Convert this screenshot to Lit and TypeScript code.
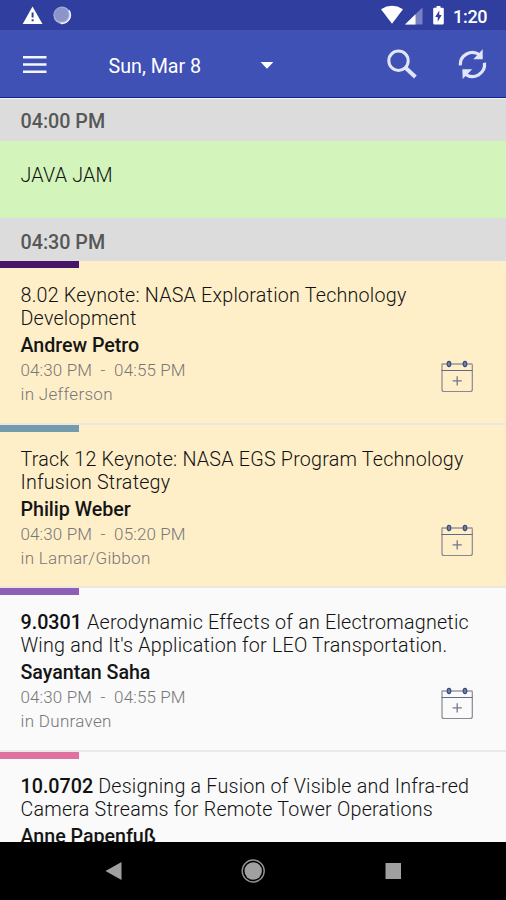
import { LitElement, html, css, svg, nothing } from "lit";
import { customElement, property } from "lit/decorators.js";

interface Session {
  code?: string;
  lines: string[];
  speaker: string;
  time: string;
  room?: string;
  track: string;
  keynote: boolean;
}

const sessions: Session[] = [
  { lines: ["8.02 Keynote: NASA Exploration Technology", "Development"], speaker: "Andrew Petro", time: "04:30 PM  -  04:55 PM", room: "in Jefferson", track: "#481667", keynote: true },
  { lines: ["Track 12 Keynote: NASA EGS Program Technology", "Infusion Strategy"], speaker: "Philip Weber", time: "04:30 PM  -  05:20 PM", room: "in Lamar/Gibbon", track: "#739bae", keynote: true },
  { code: "9.0301", lines: ["Aerodynamic Effects of an Electromagnetic", "Wing and It's Application for LEO Transportation."], speaker: "Sayantan Saha", time: "04:30 PM  -  04:55 PM", room: "in Dunraven", track: "#8f5fb7", keynote: false },
  { code: "10.0702", lines: ["Designing a Fusion of Visible and Infra-red", "Camera Streams for Remote Tower Operations"], speaker: "Anne Papenfuß", time: "", track: "#df729f", keynote: false },
];

@customElement("status-bar")
export class StatusBar extends LitElement {
  static styles = css`
    :host { display: flex; align-items: center; height: 30px; flex: none; background: #303f9f; color: #fff; }
    svg { display: block; flex: none; }
    .left { margin-left: 22px; }
    .right { margin-left: auto; }
    .clock { width: 53px; box-sizing: border-box; padding-top: 2px; font: 500 18px/27px Roboto, sans-serif; letter-spacing: -0.3px; }
  `;
  render() {
    return html`
      <svg class="left" width="50" height="30" viewBox="22 0 50 30">
        <path d="M32.5 6.5 42.5 24H22.7z" fill="#fff" />
        <path d="M31.6 12.6h2v5h-2zM31.6 19.2h2v2h-2z" fill="#303f9f" />
        <circle cx="62" cy="15.2" r="8.6" fill="#abb2dc" />
        <circle cx="61.5" cy="14.6" r="7.2" fill="#8c95ca" />
        <path d="M69 10.5A8.4 8.4 0 0 1 60.5 23.2" fill="none" stroke="#eef0fb" stroke-width="1.6" />
      </svg>
      <svg class="right" width="73" height="30" viewBox="380 0 73 30">
        <path d="M381 9.2Q392 2.3 403 9.2L392 23.8z" fill="#fff" />
        <path d="M422.5 7.5V24.5H405z" fill="#7782c2" />
        <path d="M415.5 14.3V24.5H405z" fill="#fff" />
        <path d="M434.5 7.7h2V6h4v1.700h2q1.300 0 1.300 1.300v14.300q0 1.300-1.300 1.300h-8q-1.300 0-1.300-1.300V9q0-1.300 1.300-1.300z" fill="#fff" />
        <path d="M439.300 10.500 435.200 16.900h2.500v4.800l4-6.800h-2.400z" fill="#303f9f" />
      </svg>
      <div class="clock">1:20</div>
    `;
  }
}

@customElement("app-bar")
export class AppBar extends LitElement {
  static styles = css`
    :host { display: flex; align-items: center; height: 67px; flex: none; background: #3f51b5; color: #fff; border-bottom: 1px solid #0d239c; }
    svg { display: block; flex: none; }
    .menu { margin-left: 22px; }
    .date { margin-left: 60.500px; width: 151.500px; padding-top: 6px; font: 400 19.700px/24px Roboto, sans-serif; white-space: nowrap; }
    .search { margin-left: auto; margin-right: 38px; }
    .sync { margin-right: 14px; }
  `;
  render() {
    return html`
      <svg class="menu" width="26" height="67" viewBox="22 30 26 67">
        <path d="M23 57.200h23.500M23 64.500h23.500M23 71.800h23.500" stroke="#f5f6fd" stroke-width="2.600" />
      </svg>
      <div class="date">Sun, Mar 8</div>
      <svg width="14" height="67" viewBox="260 30 14 67"><path d="M260.600 62h12.800l-6.400 6.700z" fill="#fff" /></svg>
      <svg class="search" width="34" height="67" viewBox="384 30 34 67">
        <circle cx="398.500" cy="60.700" r="9.700" fill="none" stroke="#e1e5f8" stroke-width="3" />
        <path d="M405 67.200 415.400 77" stroke="#e1e5f8" stroke-width="4" />
      </svg>
      <svg class="sync" width="36" height="67" viewBox="456 30 36 67">
        <g fill="none" stroke="#e1e5f8" stroke-width="3.200">
          <path d="M460.300 65.300A12.200 12.200 0 0 1 479.500 54.700" />
          <path d="M484.500 62.800A12.200 12.200 0 0 1 465.300 74.200" />
        </g>
        <path d="M482.700 49.300V59.200H473.300zM462.300 69.200H472.200L462.700 79z" fill="#e1e5f8" />
      </svg>
    `;
  }
}

@customElement("session-card")
export class SessionCard extends LitElement {
  @property({ attribute: false }) session!: Session;
  static styles = css`
    :host { display: block; height: 163.700px; flex: none; font-family: Roboto, sans-serif; }
    .card { height: 100%; box-sizing: border-box; background: #fafafa; border-bottom: 2px solid #e9e9e9; display: flex; flex-direction: column; }
    .keynote { background: #ffefc9; border-bottom-color: #eee7dc; }
    .track { width: 79px; height: 7px; flex: none; }
    .body { display: flex; justify-content: space-between; padding: 16px 32px 0 20.500px; }
    .text > div { white-space: pre; }
    .line { font-weight: 300; font-size: 19.700px; line-height: 23px; color: #111; letter-spacing: 0.220px; }
    .line b { font-weight: 500; letter-spacing: 0; }
    .speaker { font-weight: 500; font-size: 19.700px; line-height: 24px; margin-top: 4px; color: #151515; letter-spacing: -0.050px; }
    .meta { font-weight: 300; font-size: 17px; line-height: 24px; color: #777; letter-spacing: 0.320px; }
    .meta.time { letter-spacing: 0.120px; }
    .add { margin-top: 76px; flex: none; display: block; width: 34px; margin-left: -40px; }
  `;
  render() {
    const s = this.session;
    return html`
      <div class="card ${s.keynote ? "keynote" : ""}">
        <div class="track" style="background:${s.track}"></div>
        <div class="body">
          <div class="text">
            <div class="line">${s.code ? html`<b>${s.code}</b> ` : nothing}${s.lines[0]}</div>
            <div class="line">${s.lines[1]}</div>
            <div class="speaker">${s.speaker}</div>
            ${s.room
              ? html`<div class="meta time">${s.time}</div><div class="meta">${s.room}</div>`
              : nothing}
          </div>
          <svg class="add" width="34" height="34" viewBox="0 0 34 34" fill="none">
            <path d="M2 4.500V29.500Q2 31.500 4 31.500H30.300Q32.300 31.500 32.300 29.500V4.500" stroke="#8b8793" stroke-width="1.200" />
            <path d="M1.500 4H32.500M1.500 10.500H32.500" stroke="#64688a" stroke-width="1.200" />
            <path d="M17.200 16.300V25.500M12.600 20.900H21.800" stroke="#75778d" stroke-width="1.300" />
            ${[9, 25].map((x) => svg`<ellipse cx=${x} cy="4" rx="1.800" ry="2.600" fill="#7180a4" stroke="#38497b" stroke-width="1.100" />`)}
          </svg>
        </div>
      </div>
    `;
  }
}

@customElement("app-root")
export class AppRoot extends LitElement {
  static styles = css`
    :host { display: flex; flex-direction: column; width: 506px; height: 900px; overflow: hidden; background: #fafafa; font-family: Roboto, sans-serif; }
    .agenda { height: 744px; flex: none; overflow: hidden; display: flex; flex-direction: column; }
    .slot { flex: none; height: 43px; box-sizing: border-box; padding: 4px 20.500px 0; background: #dcdcdc; font: 500 19.700px/41px Roboto, sans-serif; color: #575757; }
    .first { border-top: 1.500px solid #f3f3f8; line-height: 38px; }
    .break { flex: none; height: 77px; box-sizing: border-box; padding: 23px 20.500px; background: #d3f5bc; font: 300 19.700px/24px Roboto, sans-serif; letter-spacing: 0.200px; color: #111; }
    .nav { flex: 1; background: #000; }
    .nav svg { display: block; }
  `;
  render() {
    return html`
      <status-bar></status-bar>
      <app-bar></app-bar>
      <main class="agenda">
        <div class="slot first">04:00 PM</div>
        <div class="break">JAVA JAM</div>
        <div class="slot">04:30 PM</div>
        ${sessions.map((s) => html`<session-card .session=${s}></session-card>`)}
      </main>
      <nav class="nav">
        <svg width="506" height="58" viewBox="0 842 506 58">
          <path d="M105.500 871 121.500 862V880z" fill="#a0a0a0" />
          <circle cx="253.200" cy="871" r="11" fill="none" stroke="#929292" stroke-width="1.400" />
          <circle cx="253.200" cy="871" r="8.700" fill="#a0a0a0" />
          <rect x="385.500" y="863" width="15.500" height="16" fill="#a0a0a0" />
        </svg>
      </nav>
    `;
  }
}
